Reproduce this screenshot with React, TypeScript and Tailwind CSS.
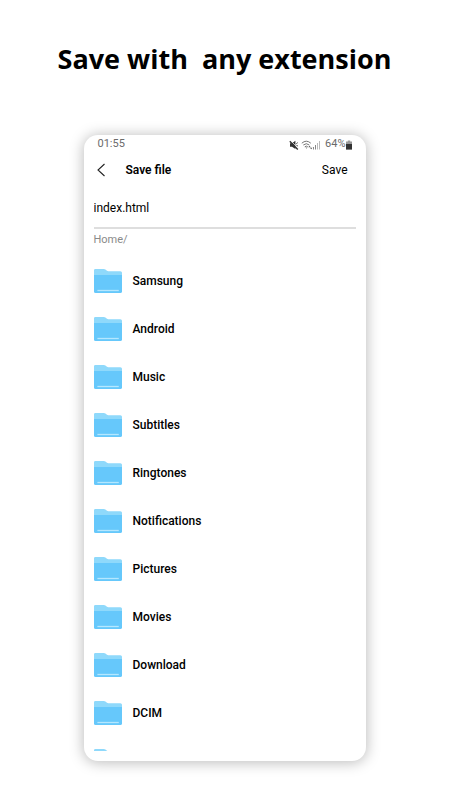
import { useState } from "react";

const folders = [
	"Samsung",
	"Android",
	"Music",
	"Subtitles",
	"Ringtones",
	"Notifications",
	"Pictures",
	"Movies",
	"Download",
	"DCIM",
];

function FolderIcon() {
	return (
		<svg className="w-7 h-[26px] shrink-0" viewBox="0 0 28 26" aria-hidden="true">
			<path d="M0 2.2Q0 1 1.4 1H9.8Q10.8 1 11.4 1.5L13 2.8Q13.5 3.2 14.3 3.2H26.3Q28 3.2 28 4.8V12H0Z" fill="#8fd9fb" />
			<path d="M0 7H28V23.4Q28 25 26.4 25H1.6Q0 25 0 23.4Z" fill="#66c8fb" />
			<path d="M3.4 22.5H24.8" stroke="#b5e7ff" strokeWidth="1.3" />
		</svg>
	);
}

function StatusIcons() {
	return (
		<div className="flex items-center">
			<svg className="w-[10px] h-[10px]" viewBox="0 0 10 10" aria-hidden="true">
				<path d="M1 3.2H3L6.4.7V9L3 6.7H1Z" fill="#333" />
				<path d="M1.6.6L9.4 8.6" stroke="#fff" strokeWidth=".8" />
				<path d="M.8 1.3L8.8 9.4" stroke="#333" strokeWidth="1.4" />
				<path d="M7.2 3.8L8.8 2.6M7.4 5.4L9 6" stroke="#555" strokeWidth="1" />
			</svg>
			<svg className="w-3 h-[10px] ml-[2px]" viewBox="0 0 12 10" fill="none" stroke="#777" aria-hidden="true">
				<path d="M.8 3.2Q5.3-.8 9.8 3.2M2.3 5Q5.3 2.4 8.3 5M3.8 6.8Q5.3 5.4 6.8 6.8" strokeWidth="1" />
				<path d="M4.4 7.5L5.4 8.8L6.4 7.5Z" fill="#777" stroke="none" />
				<path d="M7.3 7.2L8.5 5.8L9.7 7.2ZM9 7.8H11.4L10.2 9.2Z" fill="#555" stroke="none" />
			</svg>
			<svg className="w-2 h-[10px]" viewBox="0 0 8 10" aria-hidden="true">
				<path d="M.5 7V9.5M2.5 5V9.5" stroke="#888" strokeWidth="1" />
				<path d="M4.5 3V9.5M6.5 1V9.5" stroke="#bbb" strokeWidth="1" />
			</svg>
			<span className="ml-1 text-[11px] text-[#6b6b6b]">64%</span>
			<svg className="w-[6px] h-[10px]" viewBox="0 0 6 10" aria-hidden="true">
				<path d="M1.8.5H4.2V1.5H6V9.5H0V1.5H1.8Z" fill="#999" />
				<path d="M0 4H6V9.5H0Z" fill="#333" />
			</svg>
		</div>
	);
}

export default function App() {
	const [fileName, setFileName] = useState("index.html");

	return (
		<main className="flex flex-col items-center min-h-screen bg-white px-5 pt-10 pb-8 text-black font-['Roboto',sans-serif]">
			<h1 className="whitespace-pre text-center text-[27px] leading-[38px] font-bold font-['Open_Sans',sans-serif]">
				Save with  any extension
			</h1>

			<section className="w-full max-w-[282px] mt-[57px] pb-[10px] rounded-[14px] bg-white overflow-hidden shadow-[0_1px_14px_1px_rgba(0,0,0,0.26)]">
				<div className="flex items-center justify-between h-[18px] px-[14px] pt-px">
					<span className="text-[11px] text-[#6b6b6b]">01:55</span>
					<StatusIcons />
				</div>

				<header className="flex items-center h-[34px] pl-3 pr-[18px]">
					<button className="w-[30px] h-6" aria-label="Back">
						<svg className="w-[10px] h-6" viewBox="0 0 10 24" fill="none" aria-hidden="true">
							<path d="M8.5 6L2 12L8.5 18" stroke="#222" strokeWidth="1.1" />
						</svg>
					</button>
					<h2 className="text-xs font-semibold">Save file</h2>
					<button className="ml-auto text-xs">Save</button>
				</header>

				<div className="px-[10px]">
					<input
						className="block w-full h-[42px] pt-px border-b-2 border-[#dedede] text-xs outline-none"
						aria-label="File name"
						value={fileName}
						onChange={(event) => setFileName(event.target.value)}
					/>
					<p className="h-7 text-[11px] leading-[22px] text-[#8a8a8a]">Home/</p>
					<ul className="h-[494px] overflow-hidden">
						{folders.map((name) => (
							<li key={name}>
								<button className="flex items-center gap-[11px] w-full h-12 text-left text-xs font-medium">
									<FolderIcon />
									{name}
								</button>
							</li>
						))}
						<li className="flex items-center h-12">
							<FolderIcon />
						</li>
					</ul>
				</div>
			</section>
		</main>
	);
}
